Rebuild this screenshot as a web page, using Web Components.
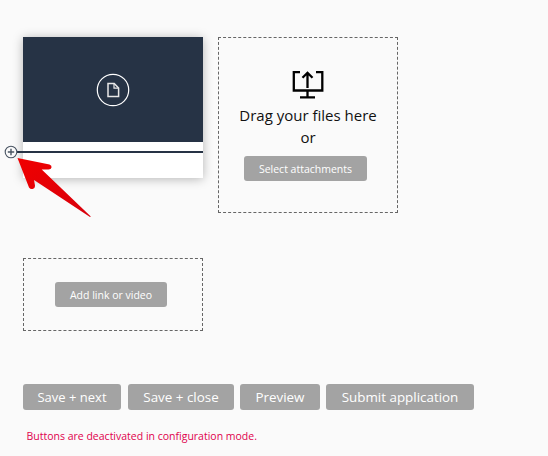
<!DOCTYPE html>
<html>
<head>
<meta charset="utf-8">
<style>
  html, body { margin: 0; background: #fafafa; }
  body { font-family: "Open Sans", sans-serif; }
</style>
</head>
<body>
<application-form></application-form>

<script>
(function (customElements) {

    class GreyButton extends HTMLElement {
        constructor() {
            super();
            this.attachShadow({ mode: 'open' });
            this.shadowRoot.innerHTML = `
      <style>
        :host {
          display: inline-flex;
          align-items: center;
          justify-content: center;
          box-sizing: border-box;
          height: 26px;
          background: #a3a3a3;
          color: #fff;
          border-radius: 3px;
          font-size: 13.4px;
          white-space: nowrap;
        }
        :host([small]) {
          height: 25px;
          font-size: 10.5px;
        }
      </style>
      <slot></slot>`;
        }
    }

    class DashedBox extends HTMLElement {
        constructor() {
            super();
            this.attachShadow({ mode: 'open' });
            this.shadowRoot.innerHTML = `
      <style>
        :host {
          display: flex;
          flex-direction: column;
          align-items: center;
          justify-content: center;
          box-sizing: border-box;
          width: 180px;
          border: 1px dashed #666;
          padding-right: 4px;
        }
      </style>
      <slot></slot>`;
        }
    }

    class FileCard extends HTMLElement {
        constructor() {
            super();
            this.attachShadow({ mode: 'open' });
            this.shadowRoot.innerHTML = `
      <style>
        :host {
          display: block;
          position: relative;
          width: 180px;
          height: 141px;
          background: #fff;
          box-shadow: 0 1px 10px rgba(0, 0, 0, .28);
        }
        .thumb {
          height: 105px;
          background: #263345;
          display: flex;
          align-items: center;
          justify-content: center;
        }
        .thumb svg { display: block; margin: 1px 1px 0 0; }
        .rule {
          height: 2px;
          margin-top: 9px;
          background: #263345;
        }
        .insert {
          position: absolute;
          left: -6px;
          top: 114px;
          width: 6px;
          height: 2px;
          background: #263345;
        }
        .plus {
          position: absolute;
          left: -19px;
          top: 108px;
        }
      </style>
      <div class="thumb">
        <svg width="34" height="34" viewBox="0 0 34 34" fill="none">
          <circle cx="17" cy="17" r="15.700" stroke="#fff" stroke-width="1.200"/>
          <path d="M12 10.400h6.200l4.400 4.600v8.600H12z" stroke="#e8e8e8" stroke-width="1.500"/>
          <path d="M18 10.400v4.800h4.600" stroke="#e8e8e8" stroke-width="1.200"/>
        </svg>
      </div>
      <div class="rule"></div>
      <div class="insert"></div>
      <svg class="plus" width="14" height="14" viewBox="0 0 14 14" fill="none">
        <circle cx="7" cy="7" r="5.800" fill="#fafafa" stroke="#4a5563" stroke-width="1.100"/>
        <path d="M7 3.800v6.400M3.800 7h6.400" stroke="#4a5563" stroke-width="1.400"/>
      </svg>`;
        }
    }

    class ApplicationForm extends HTMLElement {
        constructor() {
            super();
            this.attachShadow({ mode: 'open' });
            this.shadowRoot.innerHTML = `
      <style>
        :host {
          display: block;
          position: relative;
          box-sizing: border-box;
          width: 548px;
          height: 456px;
          padding: 37px 0 0 23px;
          overflow: hidden;
          font-family: "Open Sans", sans-serif;
          color: #111;
        }
        .top { display: flex; gap: 15px; align-items: flex-start; }
        .drop { height: 176px; justify-content: flex-start; padding-top: 32px; padding-right: 0; }
        .drop svg { display: block; }
        .drop p { margin: 0; font-size: 15px; line-height: 21.500px; text-align: center; }
        .drop .lead { margin-top: 5px; }
        .drop grey-button { margin-top: 8px; width: 123px; margin-right: 5px; }
        .link { height: 73px; margin-top: 45px; }
        .link grey-button { width: 112px; }
        .actions { display: flex; margin-top: 53px; }
        .actions grey-button:nth-child(1) { width: 98px; margin-right: 7px; font-size: 13px; }
        .actions grey-button:nth-child(2) { width: 106px; margin-right: 6px; }
        .actions grey-button:nth-child(3) { width: 80px; margin-right: 6px; }
        .actions grey-button:nth-child(4) { width: 148px; }
        .note {
          margin: 19px 0 0 3.500px;
          font-size: 10.500px;
          line-height: 15px;
          color: #e0004d;
        }
        .arrow { position: absolute; left: 0; top: 0; pointer-events: none; }
      </style>
      <div class="top">
        <file-card></file-card>
        <dashed-box class="drop">
          <svg width="32" height="30" viewBox="0 0 32 30" fill="none" stroke="#000" stroke-width="2.300">
            <path d="M8 2.200H1.800v18.300h28.500V2.200h-6.300"/>
            <path d="M15.500 18V3M10.500 7.800l5-5 5 5"/>
            <path d="M15.500 20.500v6.800M8 27.300h15"/>
          </svg>
          <p class="lead">Drag your files here</p>
          <p>or</p>
          <grey-button small>Select attachments</grey-button>
        </dashed-box>
      </div>
      <dashed-box class="link">
        <grey-button small>Add link or video</grey-button>
      </dashed-box>
      <div class="actions">
        <grey-button>Save + next</grey-button>
        <grey-button>Save + close</grey-button>
        <grey-button>Preview</grey-button>
        <grey-button>Submit application</grey-button>
      </div>
      <p class="note">Buttons are deactivated in configuration mode.</p>
      <svg class="arrow" width="548" height="456" viewBox="0 0 548 456">
        <defs>
          <linearGradient id="red" x1="0" y1="0" x2="1" y2="1">
            <stop offset="0" stop-color="#f00000"/>
            <stop offset="1" stop-color="#d8000c"/>
          </linearGradient>
        </defs>
        <path d="M17.500 158L49.500 164.500Q52 165.500 51.500 167.500Q51 169.500 48.500 169.500L41.700 169.500L90.800 216.500L90 217L34 180L35 185.500Q35 188.500 32.500 189Q30.500 189.500 29 187.500Z" fill="url(#red)"/>
      </svg>`;
        }
    }

    customElements.define('grey-button', GreyButton);
    customElements.define('dashed-box', DashedBox);
    customElements.define('file-card', FileCard);
    customElements.define('application-form', ApplicationForm);

})(window.customElements);
</script>
</body>
</html>
